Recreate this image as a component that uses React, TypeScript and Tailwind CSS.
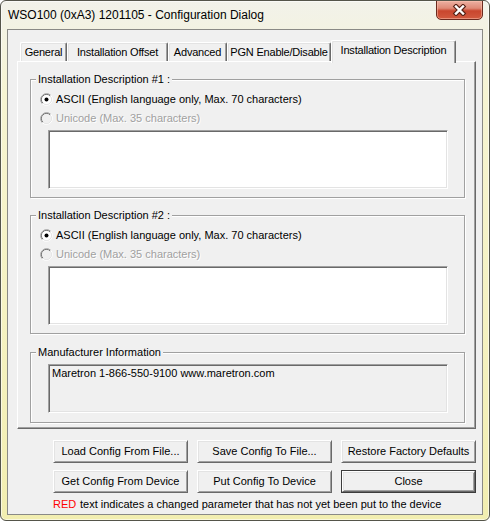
import React from 'react';

const font = "font-['Liberation_Sans',Arial,sans-serif]";

const Radio = ({ checked, disabled }: { checked?: boolean; disabled?: boolean }) => (
  <svg width="13" height="13" viewBox="0 0 13 13" className="shrink-0">
    <path d="M2.26 10.74 A6 6 0 0 1 10.74 2.26" fill="none" stroke="#a0a0a0" strokeWidth="1" />
    <path d="M10.74 2.26 A6 6 0 0 1 2.26 10.74" fill="none" stroke="#ffffff" strokeWidth="1" />
    <path d="M2.96 10.04 A5 5 0 0 1 10.04 2.96" fill="none" stroke="#696969" strokeWidth="1" />
    <path d="M10.04 2.96 A5 5 0 0 1 2.96 10.04" fill="none" stroke="#e3e3e3" strokeWidth="1" />
    <circle cx="6.5" cy="6.5" r="4.5" fill={disabled ? '#f0f0f0' : '#ffffff'} />
    {checked && <circle cx="6.5" cy="6.5" r="2" fill="#000000" />}
  </svg>
);

const Tab = ({ label, width, selected }: { label: string; width: string; selected?: boolean }) =>
  selected ? (
    <div
      className={`${width} relative z-10 -mb-[2px] flex h-[23px] items-start justify-center rounded-t-[2px] border-l border-t border-r border-l-white border-t-white border-r-[#696969] bg-[#f0f0f0] pt-[3px] leading-[13px] tracking-[-0.2px] shadow-[inset_-1px_0_0_#a0a0a0,inset_1px_1px_0_#e3e3e3]`}
    >
      {label}
    </div>
  ) : (
    <div
      className={`${width} flex h-[19px] items-center justify-center whitespace-nowrap rounded-t-[2px] border-l border-t border-r border-l-white border-t-white border-r-[#696969] leading-[13px] tracking-[-0.2px] shadow-[inset_-1px_0_0_#a0a0a0,inset_1px_1px_0_#e3e3e3]`}
    >
      {label}
    </div>
  );

const GroupBox = ({ title, height, children }: { title: string; height: string; children: React.ReactNode }) => (
  <div className={`relative w-[435px] ${height} border border-[#a0a0a0] shadow-[inset_1px_1px_0_#fff,1px_1px_0_#fff]`}>
    <span className="absolute left-[5px] top-[-7px] bg-[#f0f0f0] px-[2px] leading-[13px]">{title}</span>
    {children}
  </div>
);

const Sunken = ({ className, children }: { className: string; children?: React.ReactNode }) => (
  <div
    className={`${className} border border-t-[#a0a0a0] border-l-[#a0a0a0] border-r-white border-b-white shadow-[inset_1px_1px_0_#696969,inset_-1px_-1px_0_#e3e3e3]`}
  >
    {children}
  </div>
);

const DescriptionGroup = ({ n }: { n: number }) => (
  <GroupBox title={`Installation Description #${n} :`} height="h-[119px]">
    <div className="flex flex-col pl-[9px] pt-[10px]">
      <div className="flex h-[19px] items-center gap-[3px] leading-[13px]">
        <Radio checked />
        <span>ASCII (English language only, Max. 70 characters)</span>
      </div>
      <div className="flex h-[19px] items-center gap-[3px] leading-[13px]">
        <Radio disabled />
        <span className="text-[#a0a0a0] [text-shadow:1px_1px_0_#fff]">Unicode (Max. 35 characters)</span>
      </div>
      <Sunken className="ml-[8px] mt-[2px] h-[59px] w-[400px] bg-white" />
    </div>
  </GroupBox>
);

const Button = ({ label, isDefault }: { label: string; isDefault?: boolean }) =>
  isDefault ? (
    <div className="h-[23px] border border-[#3c3c3c]">
      <div className="flex h-full items-center justify-center border border-t-white border-l-white border-r-[#696969] border-b-[#696969] bg-[#f0f0f0] pb-[1px] leading-[13px] shadow-[inset_1px_1px_0_#e3e3e3,inset_-1px_-1px_0_#a0a0a0]">
        {label}
      </div>
    </div>
  ) : (
    <div className="flex h-[23px] items-center justify-center border border-t-white border-l-white border-r-[#696969] border-b-[#696969] bg-[#f0f0f0] leading-[13px] shadow-[inset_1px_1px_0_#e3e3e3,inset_-1px_-1px_0_#a0a0a0]">
      {label}
    </div>
  );

export default function App() {
  return (
    <div
      className={`relative flex h-[521px] w-[490px] flex-col overflow-hidden rounded-[6px] border border-[#55554a] bg-[linear-gradient(to_bottom,#f2f2ea_0%,#f6f4d2_18%,#f5f2c2_60%,#f2eeb0_100%)] shadow-[inset_0_0_0_1px_rgba(255,255,255,0.6)] ${font} text-[11px] text-black`}
    >
      {/* Title bar */}
      <div className="flex h-[28px] items-center pl-[7px] text-[12px] leading-[15px]">
        WSO100 (0xA3) 1201105 - Configuration Dialog
      </div>
      <div className="absolute right-[6px] top-[-1px] flex h-[20px] w-[47px] items-center justify-center rounded-b-[5px] border border-[#6b2a1f] bg-[linear-gradient(to_bottom,#ecb0a2_0%,#df8a77_40%,#c9462e_55%,#d25a3f_100%)] shadow-[inset_0_0_0_1px_rgba(255,200,180,0.5)]">
        <svg width="15" height="12" viewBox="0 0 15 12">
          <path d="M4 2.5 L11 9.5 M11 2.5 L4 9.5" stroke="#5a2418" strokeWidth="4.6" strokeLinecap="square" />
          <path d="M4 2.5 L11 9.5 M11 2.5 L4 9.5" stroke="#ffffff" strokeWidth="2.4" strokeLinecap="square" />
        </svg>
      </div>

      {/* Client area */}
      <div className="mx-[6px] flex h-[486px] flex-col border border-[#8a8a86] bg-[#f0f0f0] pl-[9px] pt-[10px]">
        <div className="flex h-[21px] items-end pl-[3px]">
          <Tab label="General" width="w-[47px]" />
          <Tab label="Installation Offset" width="w-[101px]" />
          <Tab label="Advanced" width="w-[59px]" />
          <Tab label="PGN Enable/Disable" width="w-[104px]" />
          <Tab label="Installation Description" width="w-[125px]" selected />
        </div>

        <div className="flex h-[368px] w-[459px] flex-col border border-t-white border-l-white border-r-[#696969] border-b-[#696969] pl-[12px] pt-[17px] shadow-[inset_-1px_-1px_0_#a0a0a0]">
          <DescriptionGroup n={1} />
          <div className="mt-[17px]">
            <DescriptionGroup n={2} />
          </div>
          <div className="mt-[18px]">
            <GroupBox title="Manufacturer Information" height="h-[71px]">
              <div className="pl-[17px] pt-[11px]">
                <Sunken className="h-[49px] w-[400px] bg-[#f0f0f0] px-[3px] pt-[2px] leading-[13px]">
                  Maretron 1-866-550-9100 www.maretron.com
                </Sunken>
              </div>
            </GroupBox>
          </div>
        </div>

        <div className="ml-[36px] mt-[11px] grid grid-cols-[135px_135px_135px] gap-x-[9px] gap-y-[7px]">
          <Button label="Load Config From File..." />
          <Button label="Save Config To File..." />
          <Button label="Restore Factory Defaults" />
          <Button label="Get Config From Device" />
          <Button label="Put Config To Device" />
          <Button label="Close" isDefault />
        </div>

        <div className="ml-[36px] mt-[5px] flex leading-[13px]">
          <span className="inline-block w-[27px] text-[#ff0000]">RED</span>
          <span>text indicates a changed parameter that has not yet been put to the device</span>
        </div>
      </div>
    </div>
  );
}
